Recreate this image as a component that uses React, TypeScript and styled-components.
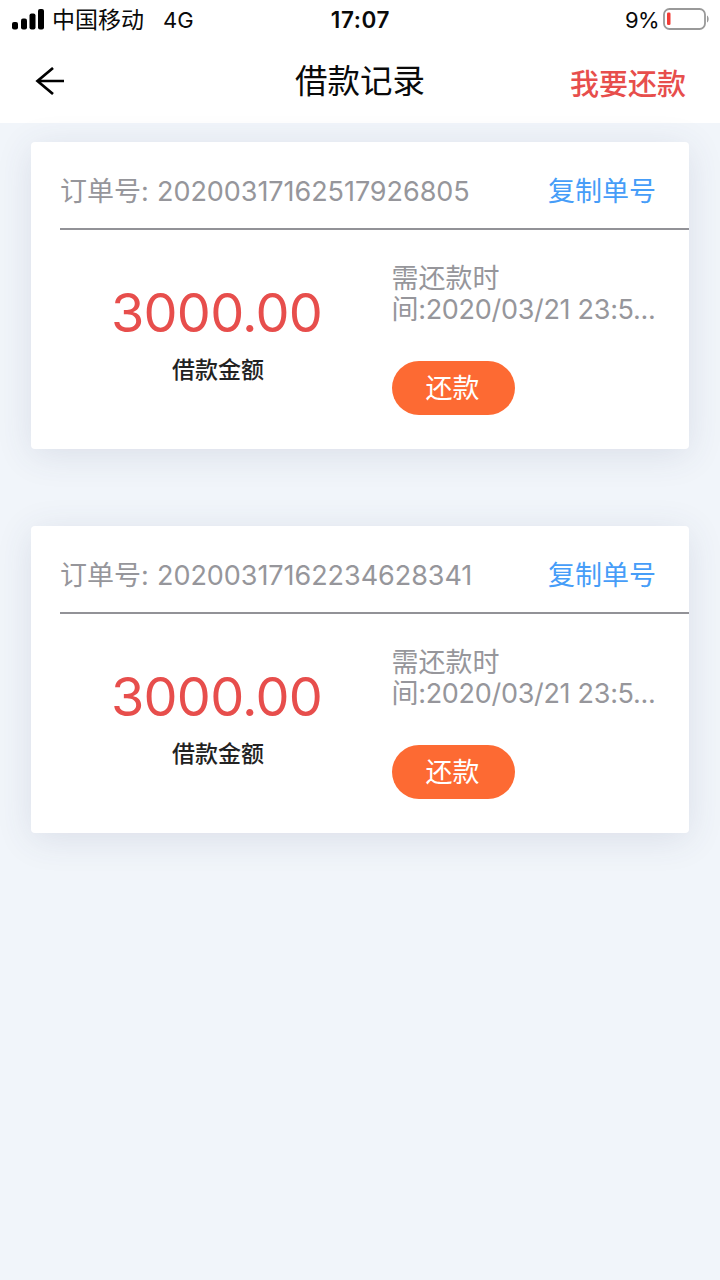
import React from 'react';
import styled, { createGlobalStyle } from 'styled-components';

const GlobalStyle = createGlobalStyle`
  * { box-sizing: border-box; }
  body {
    margin: 0;
    background: #f1f5fa;
    font-family: Inter, "Noto Sans CJK SC", sans-serif;
  }
`;

const Screen = styled.div`
  width: 720px;
  height: 1280px;
  overflow: hidden;
  background: #f1f5fa;
`;

const StatusBar = styled.div`
  display: grid;
  grid-template-columns: 1fr auto 1fr;
  align-items: center;
  height: 40px;
  padding: 0 11px 0 12px;
  background: #fff;
  color: #0a0a0a;
  font-size: 23px;
  line-height: 40px;
`;

const Signal = styled.svg`
  margin: 0 8px 2px 0;
`;

const StatusLeft = styled.div`
  display: flex;
  align-items: center;
`;

const Carrier = styled.span`
  width: 111px;
  font-size: 23px;
`;

const Network = styled.span`
  font-size: 22px;
`;

const Clock = styled.span`
  font-size: 22.5px;
  font-weight: 600;
  letter-spacing: 0.6px;
`;

const StatusRight = styled.div`
  display: flex;
  align-items: center;
  justify-content: flex-end;
  height: 38px;
  font-size: 22px;
  letter-spacing: -0.6px;
`;

const Battery = styled.svg`
  margin: 0 0 2px 3px;
`;

const NavBar = styled.header`
  display: grid;
  grid-template-columns: 1fr auto 1fr;
  align-items: center;
  height: 83px;
  padding: 0 34px 0 34px;
  background: #fff;
`;

const BackButton = styled.button`
  display: flex;
  width: 30px;
  margin-bottom: 2px;
  padding: 0;
  border: 0;
  background: none;
`;

const Title = styled.h1`
  margin: 0;
  color: #0a0a0a;
  font-size: 32.5px;
  font-weight: 400;
  line-height: 84px;
`;

const RepayLink = styled.a`
  justify-self: end;
  padding-top: 5px;
  color: #e74e4c;
  font-size: 29px;
  font-weight: 500;
  line-height: 78px;
`;

const List = styled.main`
  display: flex;
  flex-direction: column;
  gap: 77px;
  padding: 19px 31px 0 31px;
`;

const Card = styled.section`
  height: 307px;
  padding-left: 29px;
  border-radius: 4px;
  background: #fff;
  box-shadow: 0 6px 36px rgba(60, 65, 110, 0.12);
`;

const CardHeader = styled.div`
  display: flex;
  align-items: center;
  justify-content: space-between;
  height: 88px;
  padding: 14px 33px 0 0;
  border-bottom: 2px solid #929297;
  font-size: 27px;
  line-height: 40px;
`;

const OrderNumber = styled.div`
  display: flex;
  color: #96969b;
`;

const OrderLabel = styled.span`
  width: 97px;
  white-space: nowrap;
`;

const Digits = styled.span`
  font-size: 27px;
  letter-spacing: -0.05px;
`;

const CopyLink = styled.a`
  color: #469df8;
`;

const CardBody = styled.div`
  display: grid;
  grid-template-columns: 316px 1fr;
  column-gap: 15.5px;
`;

const AmountColumn = styled.div`
  display: flex;
  flex-direction: column;
  align-items: center;
  padding-top: 53px;
`;

const Amount = styled.div`
  margin-right: 3px;
  color: #e74e4c;
  font-size: 54px;
  line-height: 60px;
  letter-spacing: -0.8px;
`;

const AmountLabel = styled.div`
  margin-top: 11px;
  color: #222;
  font-size: 23px;
  font-weight: 500;
  line-height: 32px;
`;

const DueColumn = styled.div`
  padding-top: 33px;
`;

const DueLine = styled.div<{ $tight?: boolean }>`
  height: ${({ $tight }) => ($tight ? '32px' : '31px')};
  color: #96969b;
  font-size: 27px;
  line-height: 32px;
  letter-spacing: ${({ $tight }) => ($tight ? '-0.3px' : '0')};
  white-space: nowrap;
`;

const RepayButton = styled.button`
  display: block;
  width: 123px;
  height: 54px;
  margin-top: 35px;
  padding: 1px 1px 0 0;
  border: 0;
  border-radius: 27px;
  background: #fd6a33;
  color: #fff;
  font-family: inherit;
  font-size: 27px;
  line-height: 54px;
`;

type Loan = { order: string; amount: string; due: string };

const loans: Loan[] = [
  { order: '20200317162517926805', amount: '3000.00', due: '2020/03/21 23:5...' },
  { order: '20200317162234628341', amount: '3000.00', due: '2020/03/21 23:5...' },
];

function LoanCard({ order, amount, due }: Loan) {
  return (
    <Card>
      <CardHeader>
        <OrderNumber>
          <OrderLabel>订单号:</OrderLabel>
          <Digits>{order}</Digits>
        </OrderNumber>
        <CopyLink>复制单号</CopyLink>
      </CardHeader>
      <CardBody>
        <AmountColumn>
          <Amount>{amount}</Amount>
          <AmountLabel>借款金额</AmountLabel>
        </AmountColumn>
        <DueColumn>
          <DueLine>需还款时</DueLine>
          <DueLine $tight>间:{due}</DueLine>
          <RepayButton>还款</RepayButton>
        </DueColumn>
      </CardBody>
    </Card>
  );
}

export default function App() {
  return (
    <Screen>
      <GlobalStyle />
      <StatusBar>
        <StatusLeft>
          <Signal width="32" height="21" viewBox="0 0 32 21" fill="#000">
            <rect x="0" y="13" width="6" height="7.5" rx="2" />
            <rect x="9" y="9.5" width="6" height="11" rx="2" />
            <rect x="17.5" y="4.5" width="6" height="16" rx="2" />
            <rect x="26" y="0" width="6" height="20.5" rx="2" />
          </Signal>
          <Carrier>中国移动</Carrier>
          <Network>4G</Network>
        </StatusLeft>
        <Clock>17:07</Clock>
        <StatusRight>
          <span>9%</span>
          <Battery width="47" height="22" viewBox="0 0 47 22">
            <rect x="2" y="1" width="41" height="20" rx="5.5" fill="none" stroke="#999" strokeWidth="1.8" />
            <rect x="5" y="4.5" width="3.5" height="12.5" rx="1.3" fill="#f23b35" />
            <path d="M45 7.5c2.2 1.2 2.2 5.8 0 7z" fill="#999" />
          </Battery>
        </StatusRight>
      </StatusBar>
      <NavBar>
        <BackButton aria-label="返回">
          <svg width="30" height="28" viewBox="0 0 30 28" fill="none" stroke="#000" strokeWidth="2.7">
            <path d="M19 1L3.5 14L19 27M3 14H30" />
          </svg>
        </BackButton>
        <Title>借款记录</Title>
        <RepayLink>我要还款</RepayLink>
      </NavBar>
      <List>
        {loans.map((loan) => (
          <LoanCard key={loan.order} {...loan} />
        ))}
      </List>
    </Screen>
  );
}
